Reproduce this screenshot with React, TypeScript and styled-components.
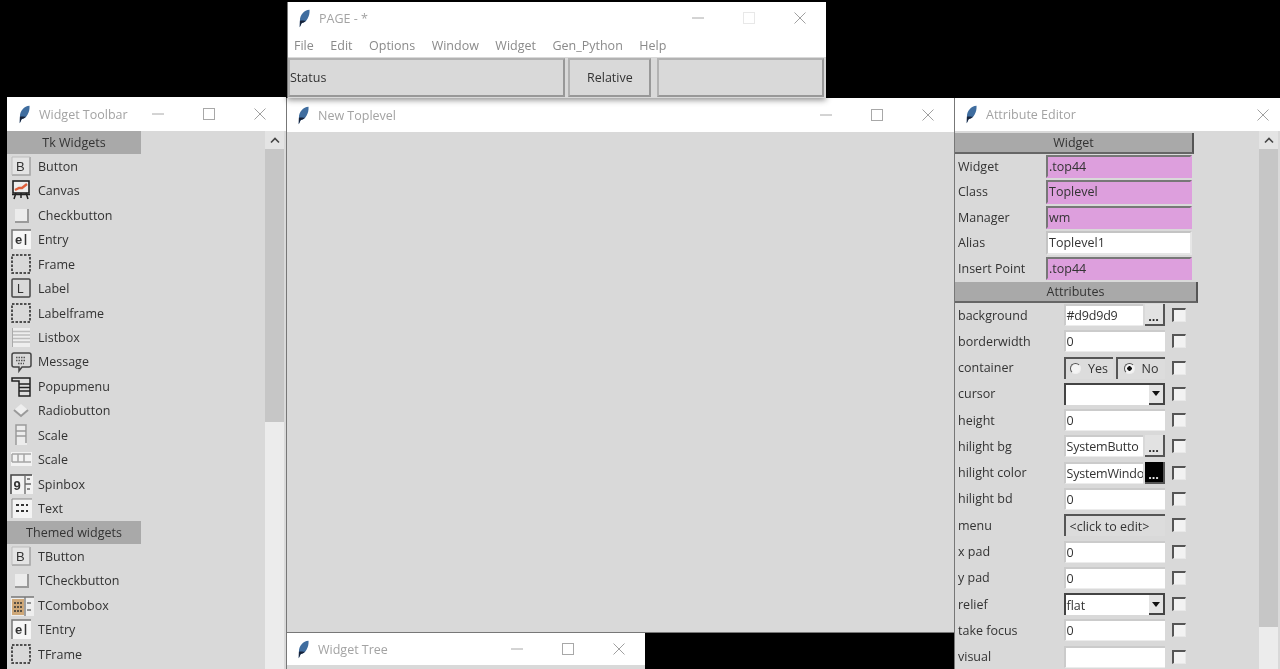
import React from 'react';
import styled, { createGlobalStyle } from 'styled-components';

const Global = createGlobalStyle`
  html, body { margin: 0; padding: 0; background: #000; overflow: hidden; }
  * { box-sizing: border-box; }
`;

const Desktop = styled.div`
  position: relative;
  width: 1280px;
  height: 669px;
  background: #000;
  overflow: hidden;
  font-family: "Open Sans", "Noto Sans", sans-serif;
  font-size: 12.5px;
  color: #333;
  filter: blur(0.75px);
`;

const Win = styled.div<{ $x: number; $y: number; $w: number; $h: number; $z: number; $shadow?: boolean }>`
  position: absolute;
  left: ${p => p.$x}px;
  top: ${p => p.$y}px;
  width: ${p => p.$w}px;
  height: ${p => p.$h}px;
  z-index: ${p => p.$z};
  display: flex;
  flex-direction: column;
  background: #d9d9d9;
  border-left: 1px solid #777;
  box-shadow: ${p => (p.$shadow ? '0 2px 6px rgba(0,0,0,.45)' : 'none')};
  overflow: hidden;
`;

const ToplevelWin = styled(Win)`
  border-bottom: 1px solid #777;
`;

const TitleBar = styled.div<{ $h: number }>`
  flex: none;
  height: ${p => p.$h}px;
  display: flex;
  align-items: center;
  background: #fff;
  padding: 0 1px 0 11px;
  color: #a3a3a3;
  font-size: 12.5px;
`;

const TitleText = styled.span`
  margin-left: 9px;
  flex: 1;
`;

const Ctl = styled.span<{ $bleed?: number }>`
  width: 51px;
  height: 100%;
  display: flex;
  align-items: center;
  justify-content: center;
  flex: none;
  margin-right: ${p => -(p.$bleed ?? 0)}px;
`;

const Feather = () => (
  <svg width="11" height="19" viewBox="0 0 12 20">
    <path d="M11.500.5C5.500 1 1 6 1 12.500L.8 19.500 3 15C8 14.500 12 8 11.500.5z" fill="#3f6d9f" />
    <path d="M1 12.500L.8 19.500 3 15c1.800-.2 3.500-1.200 4.800-2.700-2.300.6-4.300-.4-6.800.2z" fill="#17233a" />
  </svg>
);

const Title = ({ text, dimMax, closeOnly, h = 34 }: { text: string; dimMax?: boolean; closeOnly?: boolean; h?: number }) => (
  <TitleBar $h={h}>
    <Feather />
    <TitleText>{text}</TitleText>
    {!closeOnly && (
      <>
        <Ctl>
          <svg width="12" height="12" viewBox="0 0 12 12">
            <path d="M0 6h12" stroke="#a8a8a8" />
          </svg>
        </Ctl>
        <Ctl>
          <svg width="12" height="12" viewBox="0 0 12 12">
            <rect x=".5" y=".5" width="11" height="11" fill="none" stroke={dimMax ? '#e8e8e8' : '#a8a8a8'} />
          </svg>
        </Ctl>
      </>
    )}
    <Ctl $bleed={closeOnly ? 9 : 0}>
      <svg width="12" height="12" viewBox="0 0 12 12">
        <path d="M.5.5l11 11M11.500.5l-11 11" stroke="#a0a0a0" />
      </svg>
    </Ctl>
  </TitleBar>
);

const MenuBar = styled.div`
  flex: none;
  height: 23px;
  display: flex;
  align-items: center;
  gap: 16.5px;
  padding-left: 6px;
  background: #fff;
  color: #8a8a8a;
`;

const StatusRow = styled.div`
  flex: 1;
  display: flex;
  padding: 1px 2px 1px 0;
  background: #d9d9d9;
`;

const StatusCell = styled.div<{ $w: number; $gap: number; $center?: boolean }>`
  width: ${p => p.$w}px;
  margin-right: ${p => p.$gap}px;
  display: flex;
  align-items: center;
  justify-content: ${p => (p.$center ? 'center' : 'flex-start')};
  padding-bottom: 1px;
  border: 2px solid #b2b2b2;
  border-right-color: #989898;
  border-bottom-color: #989898;
  color: #333;
`;

const Body = styled.div`
  flex: 1;
  display: flex;
  min-height: 0;
`;

const Column = styled.div`
  flex: 1;
  min-width: 0;
`;

const ScrollTrack = styled.div`
  flex: none;
  width: 19px;
  margin-right: 2px;
  display: flex;
  flex-direction: column;
  background: #ececec;
`;

const ScrollArrow = styled.div`
  height: 18px;
  display: flex;
  align-items: center;
  justify-content: center;
  background: #e4e4e4;
`;

const ScrollThumb = styled.div<{ $h: number }>`
  height: ${p => p.$h}px;
  background: #c6c6c6;
`;

const Scrollbar = ({ thumb }: { thumb: number }) => (
  <ScrollTrack>
    <ScrollArrow>
      <svg width="10" height="7" viewBox="0 0 10 7">
        <path d="M1 5.500l4-4 4 4" fill="none" stroke="#444" strokeWidth="1.600" />
      </svg>
    </ScrollArrow>
    <ScrollThumb $h={thumb} />
  </ScrollTrack>
);

/* toolbar */
const GroupHeader = styled.div`
  width: 134px;
  height: 23px;
  display: flex;
  align-items: center;
  justify-content: center;
  background: #a9a9a9;
  color: #333;
`;

const ToolRow = styled.div`
  height: 24.47px;
  display: flex;
  align-items: center;
  padding-left: 2px;
  gap: 6px;
`;

const ToolbarWin = styled(Win)`
  border-left: 0;
  ${TitleBar} {
    padding-left: 12px;
  }
  ${ToolRow} {
    padding-left: 3px;
  }
`;

const IconText = styled.text<{ $bold?: boolean }>`
  font-family: "Liberation Sans", sans-serif;
  font-weight: ${p => (p.$bold ? 700 : 400)};
  fill: #333;
`;

const Dashed = () => (
  <rect x="2" y="2" width="18" height="18" fill="none" stroke="#222" strokeWidth="1.500" strokeDasharray="2.500 1.500" />
);

const toolIcons: Record<string, React.ReactNode> = {
  button: (
    <>
      <rect x="2" y="2" width="18" height="18" fill="#e4e4e4" />
      <path d="M20 2v18H2" fill="none" stroke="#a3a3a3" strokeWidth="1.500" />
      <path d="M2 20V2h18" fill="none" stroke="#bdbdbd" />
      <IconText x="6" y="16" fontSize="13">B</IconText>
    </>
  ),
  canvas: (
    <>
      <rect x="3" y="2" width="16" height="12" fill="#eee" stroke="#222" strokeWidth="1.600" />
      <path d="M5 11l4-2 3 0 5-4" fill="none" stroke="#e0603c" strokeWidth="2.400" />
      <path d="M4 20l2-6M18 20l-2-6M11 14v5M2 15.500h18" stroke="#222" strokeWidth="1.500" />
    </>
  ),
  check: (
    <>
      <rect x="5" y="5" width="13" height="13" fill="#ececec" />
      <path d="M18 5v13H5" fill="none" stroke="#9a9a9a" strokeWidth="2" />
    </>
  ),
  entry: (
    <>
      <rect x="2" y="2" width="19" height="19" fill="#f6f6f6" />
      <path d="M2 21V2h19" fill="none" stroke="#777" strokeWidth="1.500" />
      <IconText $bold x="5" y="16" fontSize="13">e</IconText>
      <path d="M15.500 6v11" stroke="#333" strokeWidth="1.500" />
    </>
  ),
  frame: <Dashed />,
  label: (
    <>
      <rect x="2" y="2" width="18" height="18" rx="1" fill="none" stroke="#444" strokeWidth="1.500" />
      <IconText x="7" y="16" fontSize="12">L</IconText>
    </>
  ),
  listbox: (
    <>
      <rect x="2" y="2" width="18" height="19" fill="#eee" />
      <path d="M2 5.500h18M2 9h18M2 12.500h18M2 16h18" stroke="#bdbdbd" strokeWidth="1.300" />
      <path d="M2.500 21V2" stroke="#aaa" />
    </>
  ),
  message: (
    <>
      <path d="M4 3h15a2 2 0 0 1 2 2v10a2 2 0 0 1-2 2h-7l-3 4v-4H4a2 2 0 0 1-2-2V5a2 2 0 0 1 2-2z" fill="none" stroke="#444" strokeWidth="1.500" />
      <path d="M6 7.500h10M6 10.500h10M8 13.500h6" stroke="#555" strokeWidth="1.300" strokeDasharray="1.500 1" />
    </>
  ),
  popup: (
    <>
      <path d="M2 3h18v18H9V6H2z" fill="#ddd" stroke="#222" strokeWidth="1.500" />
      <path d="M9 9h11M9 12.500h11M9 16h11" stroke="#222" strokeWidth="1.500" />
    </>
  ),
  radio: (
    <>
      <path d="M11 5l7 6-7 6-7-6z" fill="#eee" />
      <path d="M4 11l7 6 7-6" fill="none" stroke="#9a9a9a" strokeWidth="2" />
    </>
  ),
  scaleV: (
    <>
      <rect x="6" y="1" width="11" height="20" fill="#ececec" />
      <path d="M6 21V1h10v18M6 7h10M6 12h10" fill="none" stroke="#9a9a9a" strokeWidth="1.500" />
    </>
  ),
  scaleH: (
    <>
      <rect x="1" y="4" width="21" height="14" fill="#f2f2f2" />
      <path d="M2 6h19M2 14h19M2 6v8M8 6v8M14 6v8" fill="none" stroke="#a5a5a5" strokeWidth="1.500" />
    </>
  ),
  spin: (
    <>
      <rect x="1" y="2" width="22" height="19" fill="#f2f2f2" />
      <path d="M1 21V2h21" fill="none" stroke="#444" strokeWidth="1.500" />
      <IconText $bold x="3.500" y="17" fontSize="13">9</IconText>
      <path d="M15 3v18M15 11h6M17 6h3M17 16h3" stroke="#666" strokeWidth="1.300" />
    </>
  ),
  text: (
    <>
      <rect x="2" y="2" width="20" height="19" fill="#f4f4f4" />
      <path d="M2 21V2h20" fill="none" stroke="#888" />
      <path d="M6 8h3M11 8h3M16 8h2M6 14h3M11 14h3M16 14h2" stroke="#333" strokeWidth="2" />
    </>
  ),
  combo: (
    <>
      <rect x="1" y="3" width="23" height="19" fill="#eee" />
      <rect x="2" y="5" width="12" height="16" fill="#cfa878" />
      <path d="M4 9h8M4 13h8M4 17h8" stroke="#333" strokeWidth="1.600" strokeDasharray="2 1" />
      <path d="M1 3h23M15 3v19M17 9h4M17 16h4" stroke="#777" strokeWidth="1.300" />
    </>
  ),
};

const IconSvg = styled.svg`
  flex: none;
  overflow: visible;
`;

const ToolIcon = ({ name }: { name: string }) => (
  <IconSvg width="22" height="23" viewBox="0 0 22 23">
    {toolIcons[name]}
  </IconSvg>
);

const tkWidgets = [
  ['Button', 'button'], ['Canvas', 'canvas'], ['Checkbutton', 'check'], ['Entry', 'entry'], ['Frame', 'frame'],
  ['Label', 'label'], ['Labelframe', 'frame'], ['Listbox', 'listbox'], ['Message', 'message'], ['Popupmenu', 'popup'],
  ['Radiobutton', 'radio'], ['Scale', 'scaleV'], ['Scale', 'scaleH'], ['Spinbox', 'spin'], ['Text', 'text'],
];

const themedWidgets = [
  ['TButton', 'button'], ['TCheckbutton', 'check'], ['TCombobox', 'combo'], ['TEntry', 'entry'], ['TFrame', 'frame'],
];

const ToolList = ({ items }: { items: string[][] }) => (
  <>
    {items.map(([label, icon], i) => (
      <ToolRow key={label + i}>
        <ToolIcon name={icon} />
        {label}
      </ToolRow>
    ))}
  </>
);

/* attribute editor */
const SectionHeader = styled.div<{ $w: number; $h: number; $mt?: number }>`
  width: ${p => p.$w}px;
  height: ${p => p.$h}px;
  margin-top: ${p => p.$mt ?? 0}px;
  display: flex;
  align-items: center;
  justify-content: center;
  background: #a9a9a9;
  border-right: 2px solid #555;
  border-bottom: 2px solid #666;
  color: #333;
`;

const InfoRow = styled.div`
  height: 25.5px;
  display: grid;
  grid-template-columns: 88px 146px;
  align-items: center;
  padding: 0 0 1px 3px;
`;

const InfoValue = styled.div<{ $on?: boolean }>`
  height: 23.500px;
  display: flex;
  align-items: center;
  padding-left: 1px;
  background: ${p => (p.$on ? '#dd9fdd' : '#fff')};
  border: 2px solid ${p => (p.$on ? '#dd9fdd' : '#e6e6e6')};
  border-top-color: ${p => (p.$on ? '#777' : '#c4c4c4')};
  border-left-color: ${p => (p.$on ? '#777' : '#c4c4c4')};
  color: #333;
`;

const AttrRow = styled.div`
  height: 26.27px;
  display: grid;
  grid-template-columns: 105.5px 101px 21.5px;
  align-items: center;
  padding: 0 0 1px 3px;
`;

const Field = styled.div`
  display: flex;
  height: 22px;
  align-items: stretch;
  min-width: 0;
`;

const Entry = styled.div`
  flex: 1;
  min-width: 0;
  display: flex;
  align-items: center;
  padding-left: 1px;
  overflow: hidden;
  white-space: nowrap;
  letter-spacing: -0.2px;
  background: #fff;
  border-top: 2px solid #cbcbcb;
  border-left: 2px solid #cbcbcb;
  border-bottom: 1px solid #ececec;
`;

const DotsButton = styled.div<{ $dark?: boolean }>`
  flex: none;
  width: 20px;
  margin-left: 2px;
  display: flex;
  align-items: flex-end;
  justify-content: center;
  line-height: 14px;
  font-weight: 700;
  color: ${p => (p.$dark ? '#eee' : '#222')};
  background: ${p => (p.$dark ? '#000' : '#e2e2e2')};
  border-right: 2px solid #555;
  border-bottom: 2px solid #555;
`;

const Sunken = styled.div<{ $center?: boolean }>`
  flex: 1;
  display: flex;
  align-items: center;
  justify-content: ${p => (p.$center ? 'center' : 'flex-start')};
  padding-left: ${p => (p.$center ? 0 : 4)}px;
  gap: 7px;
  background: #dcdcdc;
  border-top: 2px solid #555;
  border-left: 2px solid #555;
  & + & {
    margin-left: 3px;
  }
`;

const RadioDot = styled.span<{ $on?: boolean }>`
  width: 11px;
  height: 11px;
  flex: none;
  border-radius: 50%;
  border: 1.500px solid #555;
  border-right-color: #eee;
  border-bottom-color: #eee;
  background: ${p => (p.$on ? 'radial-gradient(circle, #111 0 2px, #f4f4f4 2.500px)' : '#f4f4f4')};
`;

const Combo = styled.div`
  flex: 1;
  display: flex;
  align-items: center;
  padding-left: 1px;
  background: #fff;
  border-top: 2px solid #444;
  border-left: 2px solid #444;
`;

const ComboValue = styled.span`
  flex: 1;
`;

const ComboArrow = styled.span`
  width: 16px;
  height: 100%;
  display: flex;
  align-items: center;
  justify-content: center;
  background: #e4e4e4;
  border-right: 2px solid #444;
  border-bottom: 2px solid #444;
`;

const CheckBox = styled.span`
  justify-self: end;
  width: 14px;
  height: 14px;
  background: #f2f2f2;
  border-top: 2px solid #555;
  border-left: 2px solid #555;
  border-right: 1px solid #e8e8e8;
  border-bottom: 1px solid #e8e8e8;
`;

type Attr = {
  label: string;
  kind: 'entry' | 'dots' | 'darkdots' | 'radio' | 'combo' | 'menu';
  value?: string;
};

const attrs: Attr[] = [
  { label: 'background', kind: 'dots', value: '#d9d9d9' },
  { label: 'borderwidth', kind: 'entry', value: '0' },
  { label: 'container', kind: 'radio' },
  { label: 'cursor', kind: 'combo', value: '' },
  { label: 'height', kind: 'entry', value: '0' },
  { label: 'hilight bg', kind: 'dots', value: 'SystemButto' },
  { label: 'hilight color', kind: 'darkdots', value: 'SystemWindo' },
  { label: 'hilight bd', kind: 'entry', value: '0' },
  { label: 'menu', kind: 'menu', value: '<click to edit>' },
  { label: 'x pad', kind: 'entry', value: '0' },
  { label: 'y pad', kind: 'entry', value: '0' },
  { label: 'relief', kind: 'combo', value: 'flat' },
  { label: 'take focus', kind: 'entry', value: '0' },
  { label: 'visual', kind: 'entry', value: '' },
];

const info = [
  { label: 'Widget', value: '.top44', on: true },
  { label: 'Class', value: 'Toplevel', on: true },
  { label: 'Manager', value: 'wm', on: true },
  { label: 'Alias', value: 'Toplevel1', on: false },
  { label: 'Insert Point', value: '.top44', on: true },
];

const AttrField = ({ attr }: { attr: Attr }) => {
  switch (attr.kind) {
    case 'dots':
    case 'darkdots':
      return (
        <Field>
          <Entry>{attr.value}</Entry>
          <DotsButton $dark={attr.kind === 'darkdots'}>...</DotsButton>
        </Field>
      );
    case 'radio':
      return (
        <Field>
          <Sunken $center>
            <RadioDot />
            Yes
          </Sunken>
          <Sunken $center>
            <RadioDot $on />
            No
          </Sunken>
        </Field>
      );
    case 'combo':
      return (
        <Field>
          <Combo>
            <ComboValue>{attr.value}</ComboValue>
            <ComboArrow>
              <svg width="8" height="5" viewBox="0 0 8 5">
                <path d="M0 0h8L4 5z" fill="#111" />
              </svg>
            </ComboArrow>
          </Combo>
        </Field>
      );
    case 'menu':
      return (
        <Field>
          <Sunken>{attr.value}</Sunken>
        </Field>
      );
    default:
      return (
        <Field>
          <Entry>{attr.value}</Entry>
        </Field>
      );
  }
};

export default function App(): React.JSX.Element {
  return (
    <Desktop>
      <Global />

      <ToolbarWin $x={7} $y={97} $w={279} $h={572} $z={1}>
        <Title text="Widget Toolbar" />
        <Body>
          <Column>
            <GroupHeader>Tk Widgets</GroupHeader>
            <ToolList items={tkWidgets} />
            <GroupHeader>Themed widgets</GroupHeader>
            <ToolList items={themedWidgets} />
          </Column>
          <Scrollbar thumb={273} />
        </Body>
      </ToolbarWin>

      <Win $x={287} $y={2} $w={539} $h={96} $z={4} $shadow>
        <Title text="PAGE - *" dimMax h={32} />
        <MenuBar>
          {['File', 'Edit', 'Options', 'Window', 'Widget', 'Gen_Python', 'Help'].map(m => (
            <span key={m}>{m}</span>
          ))}
        </MenuBar>
        <StatusRow>
          <StatusCell $w={278} $gap={3}>Status</StatusCell>
          <StatusCell $w={83} $gap={6} $center>Relative</StatusCell>
          <StatusCell $w={167} $gap={0} />
        </StatusRow>
      </Win>

      <ToplevelWin $x={286} $y={98} $w={668} $h={535} $z={2}>
        <Title text="New Toplevel" />
      </ToplevelWin>

      <Win $x={286} $y={633} $w={359} $h={36} $z={3}>
        <Title text="Widget Tree" h={32} />
      </Win>

      <Win $x={954} $y={98} $w={326} $h={571} $z={3}>
        <Title text="Attribute Editor" closeOnly h={33} />
        <Body>
          <Column>
            <SectionHeader $w={239} $h={21} $mt={2}>Widget</SectionHeader>
            {info.map(r => (
              <InfoRow key={r.label}>
                {r.label}
                <InfoValue $on={r.on}>{r.value}</InfoValue>
              </InfoRow>
            ))}
            <SectionHeader $w={243} $h={21}>Attributes</SectionHeader>
            {attrs.map(a => (
              <AttrRow key={a.label}>
                {a.label}
                <AttrField attr={a} />
                <CheckBox />
              </AttrRow>
            ))}
          </Column>
          <Scrollbar thumb={478} />
        </Body>
      </Win>
    </Desktop>
  );
}
